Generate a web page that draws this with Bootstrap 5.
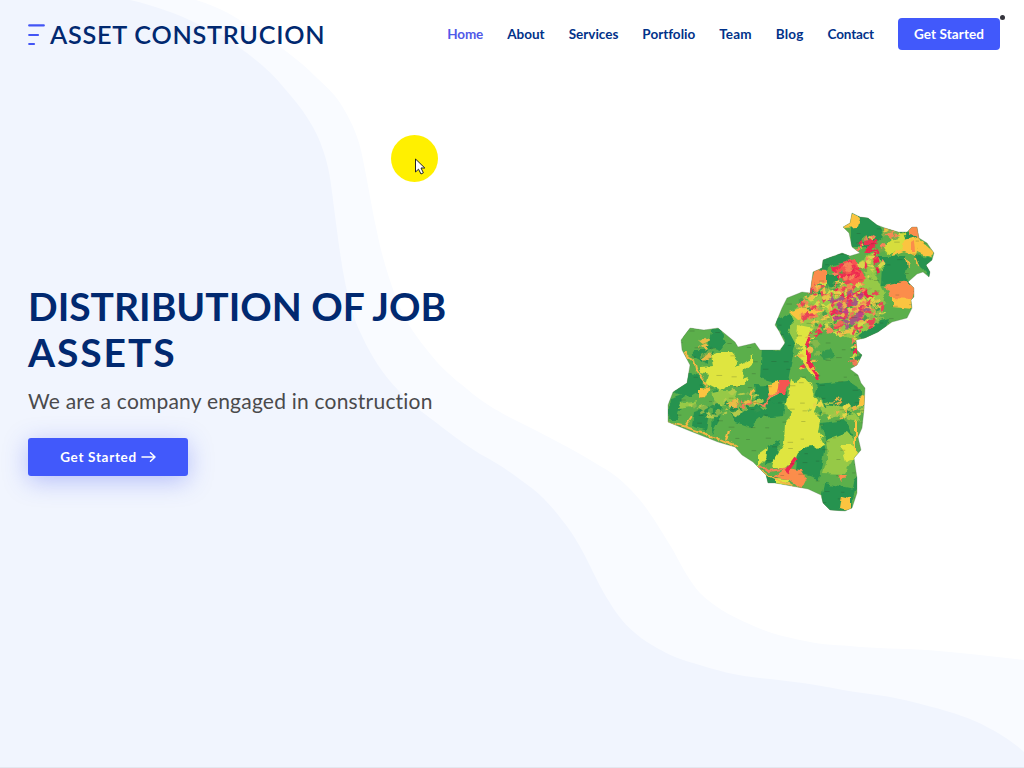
<!DOCTYPE html>
<html lang="en">
<head>
<meta charset="utf-8">
<meta name="viewport" content="width=device-width, initial-scale=1">
<title>Asset Construcion</title>
<link href="https://cdn.jsdelivr.net/npm/bootstrap@5.3.0/dist/css/bootstrap.min.css" rel="stylesheet">
<style>
body{font-family:Lato,"Open Sans",sans-serif;font-variant-ligatures:none;color:#444;background:#fff}
.page{height:768px;border-bottom:1px solid #e3e8f0}
.waves{inset:0;z-index:0}
.site-nav{height:68px;padding:0 24px 0 28px;z-index:2}
.brand-name{font-size:25.2px;font-weight:600;color:#012970;letter-spacing:.75px;line-height:32px;margin-left:5px;white-space:nowrap}
.site-links{gap:24px;margin-right:24px}
.site-links .nav-link{font-size:13.5px;line-height:20px;font-weight:700;color:#013289;padding:0;white-space:nowrap}
.site-links .nav-link.active{color:#5159e8;letter-spacing:-.1px}
.site-links .snug{letter-spacing:0}
.site-links .airy{letter-spacing:.2px}
.site-links .tight{letter-spacing:-.15px}
.cta{background:#4159fb;color:#fff;border:0;border-radius:4px;font-weight:700}
.cta:hover{background:#5969f3;color:#fff}
.cta-top{width:102px;height:32px;padding:0;font-size:13.5px;line-height:32px;letter-spacing:.1px}
.cta-dot{width:5px;height:5px;top:-3px;right:-5px;background:#35343c}
.hero-row{height:699px;z-index:1}
.hero-copy{padding:215px 0 0 28px;width:480px}
.hero-copy h1{font-size:39px;line-height:46px;font-weight:700;color:#012970;margin:0;white-space:nowrap}
.hero-copy .wide-line{letter-spacing:1.9px}
.hero-copy h2{font-size:21px;line-height:28px;font-weight:400;color:#4a4a4c;letter-spacing:.21px;margin:12px 0 23px;white-space:nowrap}
.cta-main{width:160px;height:38px;padding:0;font-size:13.5px;letter-spacing:.7px;border-radius:3px;box-shadow:0 5px 24px rgba(65,84,241,.34)}
.map-box{margin:140px 84px 0 0}
.pointer{left:391px;top:135px;z-index:3}
</style>
</head>
<body>
<div class="page position-relative overflow-hidden">
<svg class="waves position-absolute" width="1024" height="768" viewBox="0 0 1024 768">
<path fill="#f9fbff" d="M0 0H196C222 8 236 17 250 27C276 43 301 61 317 78C329 89 337 97 342 106C352 122 359 139 362 155C367 178 372 210 377 232C382 257 388 275 396 298C404 319 412 331 427 350C440 367 453 378 467 389C483 403 499 412 517 421C545 435 573 449 600 466C617 475 629 487 640 500C653 516 663 534 673 550C682 567 690 582 700 593C713 606 729 615 747 623C763 631 781 636 800 640C817 644 833 645 850 646C876 649 901 648 927 650C960 653 992 656 1024 660V768H0Z"/>
<path fill="#f1f5fe" d="M0 0H130C156 6 178 14 200 25C217 31 229 39 240 48C258 61 272 73 285 89C302 108 316 128 323 150C329 167 331 183 333 200C337 230 340 257 345 282C349 302 354 320 362 336C371 356 383 374 397 389C408 401 419 410 430 418C447 431 464 444 480 454C500 464 517 477 533 489C544 498 554 509 562 520C585 548 593 577 610 603C620 620 632 632 647 642C661 651 677 659 693 663C715 670 737 676 760 678C788 681 815 684 843 690C867 694 891 696 913 702C936 708 957 713 977 722C994 730 1011 740 1024 752V768H0Z"/>
</svg>
<header class="site-nav position-relative d-flex align-items-center">
<a class="d-flex align-items-center text-decoration-none" href="#">
<svg width="17" height="23" viewBox="0 0 17 23" fill="none" stroke="#4355f5" stroke-width="2.2" stroke-linecap="round"><path d="M1.2 2.4H15.8M1.2 12H10M1.2 21H6"/></svg>
<span class="brand-name">ASSET CONSTRUCION</span>
</a>
<nav class="nav site-links flex-nowrap ms-auto">
<a class="nav-link active" href="#">Home</a>
<a class="nav-link snug" href="#">About</a>
<a class="nav-link snug" href="#">Services</a>
<a class="nav-link snug" href="#">Portfolio</a>
<a class="nav-link airy" href="#">Team</a>
<a class="nav-link airy" href="#">Blog</a>
<a class="nav-link tight" href="#">Contact</a>
</nav>
<a class="btn cta cta-top position-relative" href="#">Get Started<span class="cta-dot position-absolute rounded-circle"></span></a>
</header>
<main class="hero-row position-relative d-flex justify-content-between align-items-start">
<section class="hero-copy">
<h1>DISTRIBUTION OF JOB<br><span class="wide-line">ASSETS</span></h1>
<h2>We are a company engaged in construction</h2>
<a class="btn cta cta-main d-inline-flex align-items-center justify-content-center" href="#">Get Started
<svg class="ms-1" width="15" height="12" viewBox="0 0 15 12" fill="none" stroke="#fff" stroke-width="1.5" stroke-linecap="round" stroke-linejoin="round"><path d="M1 6H14M9.5 1.8L14 6L9.5 10.2"/></svg></a>
</section>
<svg class="map-box" width="280" height="308" viewBox="660 208 280 308">
<defs>
<clipPath id="land"><path d="M852 213L860 217L868 218L877 225L885 228L898 232L907 232L912 227L917 227L919 238L927 243L934 253L932 260L926 265L930 272L929 277L923 272L917 274L908 282L914 288V297L911 300L912 308L907 318L892 322L878 332L865 338L856 340L857 350L862 355L857 365L850 369L858 375L861 383L865 388L864 410L862 428L858 437L861 450L854 458L857 478V493L852 508L845 511L830 510L823 503L821 495L808 489L797 487L775 483L768 483L766 475L753 462L742 455L735 447L718 442L690 431L668 422V405L673 392L687 383L690 365L682 350L681 340L690 328L704 330L718 328L735 342L738 347L755 343L760 350H780L785 343L779 331L775 325L782 308L787 298L802 292L810 293L813 272L822 268L823 260L842 253L850 256L860 253L852 247L849 233L843 227L850 223Z"/></clipPath>
<filter id="ragged" x="650" y="200" width="300" height="325" filterUnits="userSpaceOnUse"><feTurbulence type="fractalNoise" baseFrequency=".13" numOctaves="2" seed="7"/><feDisplacementMap in="SourceGraphic" scale="6" xChannelSelector="R" yChannelSelector="G"/><feGaussianBlur stdDeviation=".35"/></filter>
</defs>
<g clip-path="url(#land)">
<path fill="#5baf4b" d="M660 208H940V516H660Z"/>
<g filter="url(#ragged)">
<g fill="#259350">
<path d="M858 212L878 224L884 236L871 247L850 247V229L858 225Z"/>
<path d="M898 230L918 234L915 243L900 238Z"/>
<path d="M822 258L848 252L850 260L831 266L820 275Z"/>
<path d="M876 256L905 256L908 265L905 277L912 284L882 285L883 266Z"/>
<path d="M914 254L934 260L932 279L923 270Z"/>
<path d="M821 275H840L836 290L824 284Z"/>
<path d="M818 292L832 296L828 303L812 302Z"/>
<path d="M774 320L790 314L798 330L794 350L787 386L760 378L762 348L780 350L786 342Z"/>
<path d="M872 322L890 318L886 332L862 340L858 332Z"/>
<path d="M711 330L719 328L726 342L720 350L708 346Z"/>
<path d="M688 372L704 378L703 390L690 398L673 392Z"/>
<path d="M670 398L684 394L678 419H668Z"/><path d="M694 411L710 406L706 431L692 426Z"/>
<path d="M713 408L724 395L720 419L712 434Z"/>
<path d="M692 351H708V364L694 357Z"/>
<path d="M730 407L770 398L785 404L783 416L760 418L750 427L735 422Z"/>
<path d="M754 385L786 386L788 403L756 401Z"/>
<path d="M817 384L848 381L862 390V402L850 408L827 404L815 394Z"/>
<path d="M821 423L846 420L852 435L826 443Z"/>
<path d="M798 446L825 446L819 479L796 472Z"/>
<path d="M824 484L855 490L850 511L828 513L820 504Z"/>
<path d="M767 446L780 440L775 462L764 464Z"/><path d="M765 476H778V486H765Z"/>
<path d="M855 478L864 471V484L852 492Z"/>
<path d="M822 350L830 348L834 358L824 360L818 354Z" opacity=".7"/>
</g>
<g fill="#96c947">
<path d="M681 335L691 329L711 331L708 346L692 350Z" fill="#5baf4b"/>
<path d="M712 391H737L733 405L715 404Z"/><path d="M680 403L699 400L692 407L678 409Z"/>
<path d="M826 440L847 432L856 442L853 460L844 474L823 473L828 455Z"/>
<path d="M820 403L850 408L861 422L838 416L821 415Z"/><path d="M788 330L795 318L800 335L796 345Z"/>
<path d="M892 240L904 232L905 249L886 254L885 245Z" fill="#cada35"/>
<path d="M804 301L842 285L874 272L885 293L880 320L853 340L821 325L800 332L790 314Z"/>
<path d="M854 266L876 250L884 270L866 275Z"/>
</g>
<g fill="#dfe541">
<path d="M719 352H731L738 360L736 367L746 362L753 354V362L744 370L742 379L748 377L744 386H729L720 391L706 384L709 375L700 373L701 367L714 366L712 355Z"/>
<path d="M791 379L796 382L801 378L811 383L813 394L818 400L814 413L821 420L819 432L825 444L818 450L812 446L806 447L799 451L796 457L785 468L772 468L775 457L784 444L785 422L791 416L787 404Z"/>
<path d="M758 454L768 447L766 458L758 466Z"/><path d="M841 445L852 445L860 456L846 462Z"/>
<path d="M798 325L812 328L815 338L804 346L814 373L822 379L811 375L802 361L796 346Z"/>
<path d="M775 478L790 479L786 485L775 485Z"/>
</g>
<g fill="#fbc43f">
<path d="M851 212L860 218L857 228L842 229Z"/>
<path d="M904 240L920 236L916 256L904 252L893 256L895 248Z"/><path d="M918 239L935 253L930 258L917 252Z"/>
<path d="M892 298L911 297L913 309L892 307Z"/><path d="M699 388L710 389L706 396L699 397Z"/>
<path d="M768 386L778 381L780 393L770 398Z"/><path d="M842 496L850 498L850 512L840 509Z"/>
<path d="M854 421L856 418V452L854 450Z"/><path d="M860 397L866 395V406H858Z"/>
<path d="M789 312L812 304L824 310L809 318L798 320Z"/><path d="M802 361L813 366L820 374L814 375Z"/>
</g>
<path fill="#d6de3c" d="M899 230L905 238L903 250L889 254L884 245L892 240Z"/>
<g fill="#fb8d4c">
<path d="M814 269L826 270L826 284L820 290L807 294Z"/><path d="M885 286L907 281L916 288L913 299L891 298Z"/>
<path d="M911 226L918 225L921 237L909 235Z"/><path d="M884 228L895 230L892 239L884 236Z"/>
<path d="M786 468L801 470L806 478L801 488L789 479L774 477Z"/><path d="M838 475L847 475L842 481Z"/>
<path d="M911 242L914 240L915 252L911 252Z"/>
</g>
<path fill="#f65551" d="M779 381L790 381L785 394H777ZM842 262L856 259L860 269L866 279L855 286L843 280Z"/>
<g fill="none" stroke="#f3b844" stroke-width="2">
<path d="M666 422L686 427L706 434L724 442L738 447M691 417L685 426M730 430L727 441M684 352L694 361L696 370L705 381L706 388"/>
<path d="M748 462L766 475L782 482L802 489M753 390L750 402M906 258L908 266M916 258L919 266"/>
</g>
<path fill="none" stroke="#f38255" stroke-width="2.2" d="M729 406H741L752 402L764 405L770 396L780 392M760 465L768 471L790 468"/>
<path fill="none" stroke="#ee284f" stroke-width="4" d="M876 240L868 250L881 251M873 246L879 274M832 270L849 265L855 275L837 277M837 288L846 301L862 290L873 301M813 331L808 343V358L812 368L820 379M796 458L786 472M855 347V354"/>
</g>
<g id="urban" filter="url(#ragged)"></g>
<g id="marks" fill="#293d26" opacity=".28"></g>
</g>
<path d="M852 213L860 217L868 218L877 225L885 228L898 232L907 232L912 227L917 227L919 238L927 243L934 253L932 260L926 265L930 272L929 277L923 272L917 274L908 282L914 288V297L911 300L912 308L907 318L892 322L878 332L865 338L856 340L857 350L862 355L857 365L850 369L858 375L861 383L865 388L864 410L862 428L858 437L861 450L854 458L857 478V493L852 508L845 511L830 510L823 503L821 495L808 489L797 487L775 483L768 483L766 475L753 462L742 455L735 447L718 442L690 431L668 422V405L673 392L687 383L690 365L682 350L681 340L690 328L704 330L718 328L735 342L738 347L755 343L760 350H780L785 343L779 331L775 325L782 308L787 298L802 292L810 293L813 272L822 268L823 260L842 253L850 256L860 253L852 247L849 233L843 227L850 223Z" fill="none" stroke="#56704e" stroke-opacity=".4" stroke-width=".7"/>
</svg>
</main>
<svg class="pointer position-absolute" width="48" height="48" viewBox="0 0 48 48"><circle cx="23.5" cy="23.5" r="23.5" fill="#fff000"/><path d="M24.5 24V37L27.5 34.2L30 39L32.4 37.8L30 33H33.8Z" fill="#fff" stroke="#222" stroke-width="1"/></svg>
</div>
<script>
// Small land-use parcels, scattered around the urban areas with a fixed seed
let s = 41;
const rnd = () => (s = (s * 16807) % 2147483647) / 2147483647;
const parcels = (n, cx, cy, rx, ry, colors) => {
  let out = '';
  for (let i = 0; i < n; i++) {
    const a = rnd() * 6.283, r = Math.sqrt(rnd()), x = cx + Math.cos(a) * rx * r, y = cy + Math.sin(a) * ry * r;
    const w = 1.5 + rnd() * 4.5, h = 1.2 + rnd() * 3;
    out += `<path fill="${colors[Math.floor(rnd() * colors.length)]}" d="M${x} ${y}l${w} ${-h}l${w * .6} ${h}l${-w} ${h * .8}Z"/>`;
  }
  return out;
};
document.getElementById('urban').innerHTML =
  parcels(290, 838, 308, 42, 27, ['#f0c14a', '#d5dc48', '#8dbb4c', '#f38955', '#e94456', '#4aa04e', '#e5c947']) +
  parcels(75, 846, 308, 19, 19, ['#ec2c55', '#e33663', '#c04385', '#a35b83', '#f06b55', '#e9b54c']) +
  parcels(26, 844, 272, 15, 9, ['#ee3151', '#f65551', '#f6835a']) +
  parcels(35, 868, 258, 15, 22, ['#ee3151', '#f6835a', '#d8d74b', '#73ac49']) +
  parcels(20, 889, 233, 7, 5, ['#f38955', '#7fb04b', '#e5c947']) +
  parcels(36, 834, 410, 27, 9, ['#e3d947', '#a3c749', '#309650', '#e8b444']) +
  parcels(26, 854, 350, 6, 18, ['#f07b55', '#d5db48', '#309650']) +
  parcels(40, 724, 403, 38, 15, ['#84b84b', '#309650', '#b2cb4b']) +
  parcels(18, 740, 403, 17, 4, ['#ef7956', '#e9bc46', '#84b84b']) +
  parcels(16, 702, 350, 9, 10, ['#e9bc46', '#259350', '#73ac49']) +
  parcels(20, 804, 345, 12, 28, ['#ee3151', '#e9bc46', '#84b84b']);
let marks = '';
for (let y = 225; y < 510; y += 13) for (let x = 670; x < 930; x += 18)
  marks += `<rect x="${x + rnd() * 12}" y="${y + rnd() * 9}" width="${3 + rnd() * 3}" height=".8"/>`;
document.getElementById('marks').innerHTML = marks;
</script>
<script src="https://cdn.jsdelivr.net/npm/bootstrap@5.3.0/dist/js/bootstrap.bundle.min.js"></script>
</body>
</html>
